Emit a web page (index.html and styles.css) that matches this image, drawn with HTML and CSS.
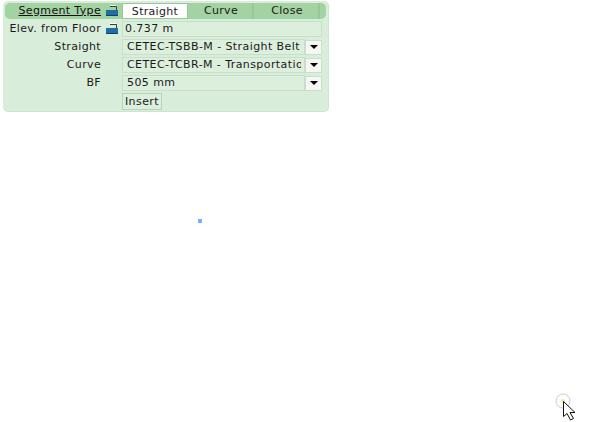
FILE: index.html
```html
<!DOCTYPE html>
<html lang="en">
<head>
<meta charset="utf-8">
<title>Segment Type</title>
<link rel="stylesheet" href="styles.css">
</head>
<body>
<div class="panel">
  <div class="row head">
    <span class="label seg">Segment Type</span>
    <svg class="lock" viewBox="0 0 12 12"><path d="M4 1.500H10.500V5" fill="none" stroke="#3a3a3a" stroke-width="1"/><path d="M4 0.500H10" stroke="#fff" stroke-width="1"/><rect x="0" y="5" width="12" height="5" fill="#1f6fa5"/><rect x="0" y="10" width="12" height="1" fill="#16405f"/></svg>
    <div class="tabs">
      <span class="tab on">Straight</span>
      <span class="tab">Curve</span>
      <span class="tab">Close</span>
    </div>
  </div>
  <div class="row">
    <span class="label">Elev. from Floor</span>
    <svg class="lock" viewBox="0 0 12 12"><path d="M4 1.500H10.500V5" fill="none" stroke="#3a3a3a" stroke-width="1"/><path d="M4 0.500H10" stroke="#fff" stroke-width="1"/><rect x="0" y="5" width="12" height="5" fill="#1f6fa5"/><rect x="0" y="10" width="12" height="1" fill="#16405f"/></svg>
    <div class="field wide">0.737 m</div>
  </div>
  <div class="row">
    <span class="label">Straight</span>
    <span class="nolock"></span>
    <div class="field"><span class="clip">CETEC-TSBB-M - Straight Belt</span></div>
    <span class="drop"><i></i></span>
  </div>
  <div class="row">
    <span class="label">Curve</span>
    <span class="nolock"></span>
    <div class="field"><span class="clip">CETEC-TCBR-M - Transportation</span></div>
    <span class="drop"><i></i></span>
  </div>
  <div class="row">
    <span class="label">BF</span>
    <span class="nolock"></span>
    <div class="field"><span class="clip">505 mm</span></div>
    <span class="drop"><i></i></span>
  </div>
  <div class="row">
    <span class="label"></span>
    <span class="nolock"></span>
    <span class="btn">Insert</span>
  </div>
</div>
<div class="dot"></div>
<svg class="cursor" width="24" height="28" viewBox="0 0 24 28">
  <circle cx="9" cy="8" r="7" fill="#fff" stroke="#ccc"/>
  <circle cx="9" cy="8" r="2" fill="#e8ec9a"/>
  <path d="M9.500 8.500V23.500L13 20.500L16.500 27L19.500 25.500L16 19.500H21Z" fill="#fff" stroke="#111" stroke-width="1"/>
</svg>
</body>
</html>
```
FILE: styles.css
```css
html, body {
  margin: 0;
  padding: 0;
  background: #fff;
  overflow: hidden;
}
body {
  width: 601px;
  height: 422px;
  position: relative;
  font-family: "DejaVu Sans", sans-serif;
  font-size: 11px;
  letter-spacing: 0.42px;
  color: #1a1a1a;
}
.panel {
  margin: 1px 0 0 3px;
  width: 326px;
  height: 111px;
  box-sizing: border-box;
  padding: 2px 2px 0;
  background: #d9eeda;
  border-radius: 5px;
  border-right: 1px solid #cfe3d0;
  border-bottom: 1px solid #cfe3d0;
}
.row {
  display: flex;
  align-items: center;
  height: 18px;
}
.head {
  width: 321px;
  height: 16px;
  margin-bottom: 1px;
  background: #a3d3a3;
  border-radius: 5px;
}
.label {
  width: 96px;
  padding-bottom: 2px;
  text-align: right;
  white-space: nowrap;
  letter-spacing: 0.35px;
}
.seg {
  text-decoration: underline;
  color: #111;
}
.lock {
  width: 12px;
  height: 12px;
  margin: 0 4px 0 5px;
  flex: none;
}
.nolock {
  width: 21px;
  flex: none;
}
.tabs {
  display: flex;
  height: 16px;
  flex: 1;
  letter-spacing: 0.3px;
}
.tab {
  width: 66px;
  box-sizing: border-box;
  padding-left: 2px;
  text-align: center;
  line-height: 15px;
  border-right: 2px solid #97c897;
}
.tab.on {
  padding-left: 0;
  background: #fff;
  border: 1px solid #97c897;
}
.field {
  box-sizing: border-box;
  width: 183px;
  height: 16px;
  line-height: 13px;
  padding-left: 4px;
  border: 1px solid #c8e0c9;
  background: #dcefdd;
  overflow: hidden;
  white-space: nowrap;
}
.field.wide {
  width: 200px;
  padding-left: 2px;
}
.clip {
  display: block;
  width: 174px;
  overflow: hidden;
}
.drop {
  box-sizing: border-box;
  width: 17px;
  height: 15px;
  background: #f6f6f4;
  border: 1px solid #c8e0c9;
  display: flex;
  align-items: center;
  justify-content: center;
}
.drop i {
  width: 0;
  height: 0;
  border-left: 4px solid transparent;
  border-right: 4px solid transparent;
  border-top: 4px solid #000;
}
.btn {
  box-sizing: border-box;
  width: 40px;
  height: 17px;
  line-height: 15px;
  text-align: center;
  border: 1px solid #b9d3ba;
  background: #dcefdd;
}
.dot {
  position: absolute;
  left: 198px;
  top: 219px;
  width: 4px;
  height: 4px;
  background: #7cabf7;
}
.cursor {
  position: absolute;
  left: 554px;
  top: 393px;
}
```
